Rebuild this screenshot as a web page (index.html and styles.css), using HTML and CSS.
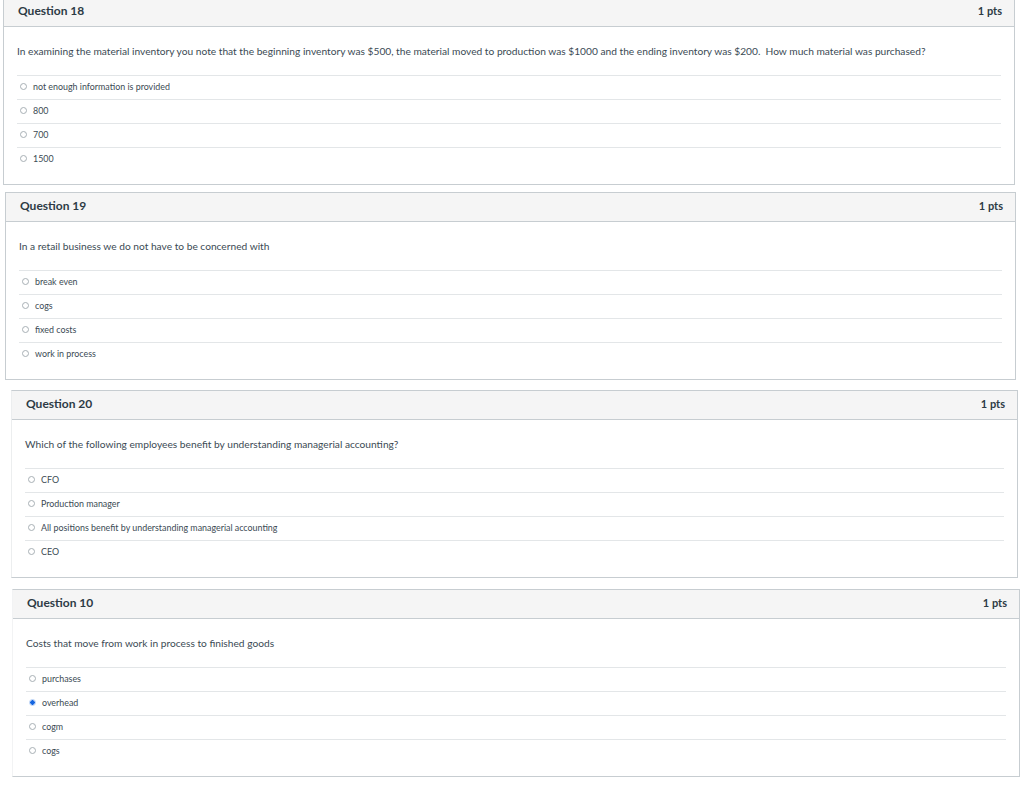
FILE: index.html
```html
<!DOCTYPE html>
<html lang="en">
<head>
  <meta charset="UTF-8">
  <title>Quiz</title>
  <link rel="stylesheet" href="styles.css">
</head>
<body>
  <div class="question q18">
    <div class="question-header">
      <span class="question-name">Question 18</span>
      <span class="question-points">1 pts</span>
    </div>
    <div class="question-body">
      <div class="question-text">In examining the material inventory you note that the beginning inventory was $500, the material moved to production was $1000 and the ending inventory was $200.&nbsp; How much material was purchased?</div>
      <div class="answers">
        <div class="answer"><span class="radio"></span>not enough information is provided</div>
        <div class="answer"><span class="radio"></span>800</div>
        <div class="answer"><span class="radio"></span>700</div>
        <div class="answer"><span class="radio"></span>1500</div>
      </div>
    </div>
  </div>

  <div class="question q19">
    <div class="question-header">
      <span class="question-name">Question 19</span>
      <span class="question-points">1 pts</span>
    </div>
    <div class="question-body">
      <div class="question-text">In a retail business we do not have to be concerned with</div>
      <div class="answers">
        <div class="answer"><span class="radio"></span>break even</div>
        <div class="answer"><span class="radio"></span>cogs</div>
        <div class="answer"><span class="radio"></span>fixed costs</div>
        <div class="answer"><span class="radio"></span>work in process</div>
      </div>
    </div>
  </div>

  <div class="question q20">
    <div class="question-header">
      <span class="question-name">Question 20</span>
      <span class="question-points">1 pts</span>
    </div>
    <div class="question-body">
      <div class="question-text">Which of the following employees benefit by understanding managerial accounting?</div>
      <div class="answers">
        <div class="answer"><span class="radio"></span>CFO</div>
        <div class="answer"><span class="radio"></span>Production manager</div>
        <div class="answer"><span class="radio"></span>All positions benefit by understanding managerial accounting</div>
        <div class="answer"><span class="radio"></span>CEO</div>
      </div>
    </div>
  </div>

  <div class="question q10">
    <div class="question-header">
      <span class="question-name">Question 10</span>
      <span class="question-points">1 pts</span>
    </div>
    <div class="question-body">
      <div class="question-text">Costs that move from work in process to finished goods</div>
      <div class="answers">
        <div class="answer"><span class="radio"></span>purchases</div>
        <div class="answer"><span class="radio checked"></span>overhead</div>
        <div class="answer"><span class="radio"></span>cogm</div>
        <div class="answer"><span class="radio"></span>cogs</div>
      </div>
    </div>
  </div>
</body>
</html>
```

FILE: styles.css
```css
body {
  margin: 0;
  font-family: Lato, "Open Sans", sans-serif;
  color: #2d3b45;
  background: #fff;
}
.question {
  border: 1px solid #c7cdd1;
  background: #fff;
  height: 188px;
  box-sizing: border-box;
}
.q18 {
  margin: -3px 9px 0 3px;
}
.q19 {
  margin: 7px 8px 0 5px;
}
.q20 {
  margin: 10px 6px 0 11px;
  border-left-color: #eceeef;
}
.q10 {
  margin: 11px 4px 0 12px;
  border-left-color: #f2f3f4;
}
.question-header {
  display: flex;
  justify-content: space-between;
  align-items: center;
  height: 29px;
  padding: 0 12px 3px 14px;
  box-sizing: border-box;
  background: #f5f5f5;
  border-bottom: 1px solid #c7cdd1;
}
.question-name {
  font-size: 12px;
  font-weight: bold;
}
.question-points {
  font-size: 11px;
  font-weight: bold;
}
.question-body {
  padding: 17px 13px 0 13px;
}
.question-text {
  font-size: 10.2px;
  line-height: 14px;
  margin-bottom: 17px;
  color: #3b4a54;
}
.answer {
  display: flex;
  align-items: center;
  height: 23px;
  padding: 0 0 2px 3px;
  box-sizing: border-box;
  border-top: 1px solid #e3e6e8;
  font-size: 8.9px;
  color: #3b4a54;
}
.answer {
  height: 24px;
}
.radio {
  width: 7px;
  height: 7px;
  border: 1px solid #a8b0b5;
  border-radius: 50%;
  margin-right: 6px;
  flex-shrink: 0;
  box-sizing: border-box;
}
.radio.checked {
  border-color: #b5cff5;
  background: radial-gradient(circle, #1565e0 0 2px, #dce9fb 2.6px);
}
```
